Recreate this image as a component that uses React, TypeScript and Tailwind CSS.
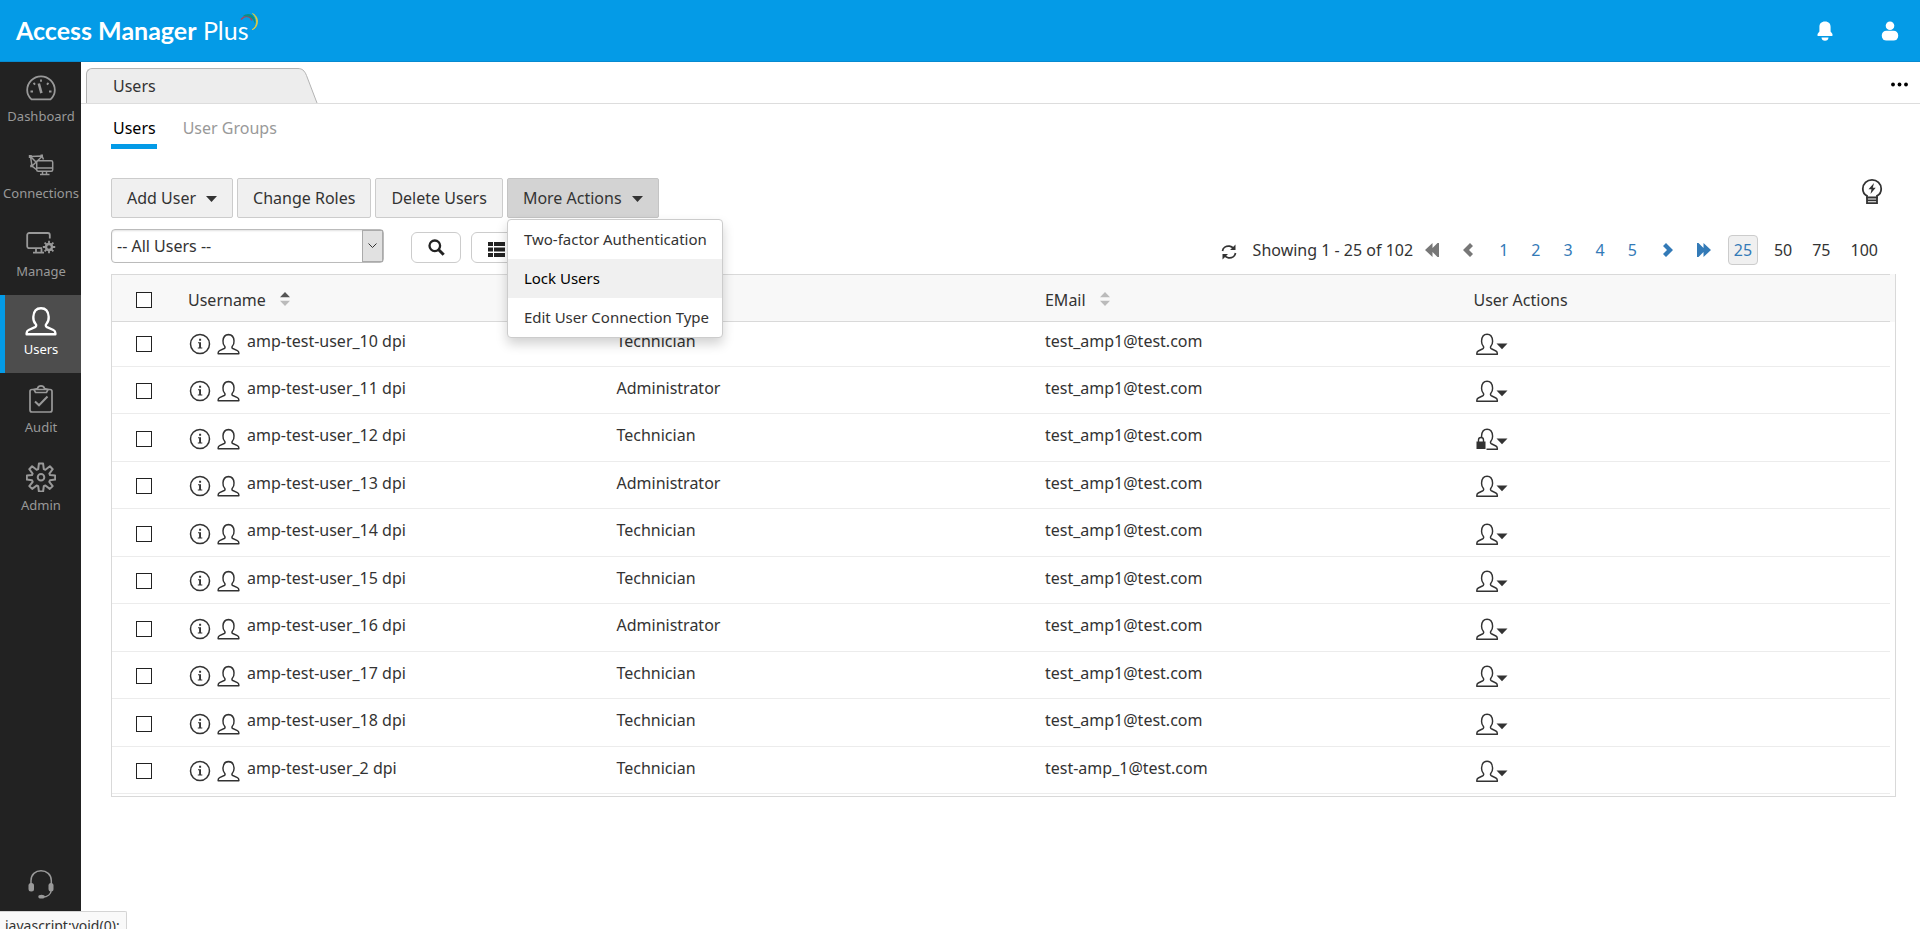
import type { ReactNode } from "react";

type IconProps = { className?: string };

const PERSON =
  "M8 17.2c-1.600-1.700-2.400-4-2.200-6.500C6.100 6 8.600 3 13 3s6.900 3 7.200 7.700c.2 2.500-.6 4.800-2.200 6.500-.9 1-.6 2.200.6 2.800l6 2.600c1.300.6 1.900 1.600 1.900 2.900v1H-.5v-1c0-1.300.6-2.300 1.900-2.900l6-2.600c1.200-.6 1.500-1.800.6-2.800z";

function PersonIcon({ className, thick = 1.6 }: IconProps & { thick?: number }) {
  return (
    <svg viewBox="-2 1 30 27" preserveAspectRatio="none" className={className} fill="none" stroke="currentColor" strokeWidth={thick} strokeLinejoin="round" aria-hidden="true">
      <path d={PERSON} />
    </svg>
  );
}

function DashboardIcon() {
  return (
    <svg viewBox="0 0 30 26" className="h-[26px] w-[30px]" fill="none" stroke="currentColor" strokeWidth="1.8" aria-hidden="true">
      <path d="M5.500 24.300C3 22 1.200 18.700 1.200 15.200 1.200 7.600 7.400 1.400 15 1.400s13.800 6.200 13.800 13.800c0 3.500-1.800 6.800-4.300 9.100z" />
      <path d="M12.800 8.500l2.600 9.700" strokeWidth="2.600" />
      <path d="M15 4.500v2.200M7.500 8l1.600 1.600M22.500 8l-1.600 1.600M4.500 16.500H7M23 16.500h2.500" />
    </svg>
  );
}

function ConnectionsIcon() {
  return (
    <svg viewBox="0 0 26 22" className="h-[22px] w-[26px]" fill="none" stroke="currentColor" strokeWidth="1.500" aria-hidden="true">
      <path d="M2.500 2.500L14 2M2.500 2.500L4 12l5 4M2.500 2.500L9 9M3.500 12.500L14 2.500M14 2l1.500 3.500" />
      <rect x="8.700" y="6.700" width="16" height="10.600" rx="1.500" fill="#222" />
      <path d="M9 14h15.500M14.500 17.500v2.500M18.500 17.500v2.500M12 20.500h9.500" />
      <path d="M.8 1h3v3h-3zM12.500.5h2.500v2.500h-2.500zM2.200 10.800h2.500v2.500H2.200z" fill="currentColor" stroke="none" />
    </svg>
  );
}

function ManageIcon() {
  return (
    <svg viewBox="0 0 30 22" className="h-[22px] w-[30px]" fill="none" stroke="currentColor" strokeWidth="1.800" aria-hidden="true">
      <path d="M16 16.200H3.200A2 2 0 0 1 1.200 14.200V3A2 2 0 0 1 3.200 1h18.600a2 2 0 0 1 2 2v3.500" />
      <path d="M10 16.500v4M15.500 16.500v4M7 20.700h11" />
      <circle cx="23" cy="15" r="3" strokeWidth="2.400" />
      <path d="M23 8.800v3M23 18.200v3M16.800 15h3M26.200 15h3M18.600 10.600l2.100 2.100M25.300 17.300l2.100 2.100M27.400 10.600l-2.100 2.100M20.700 17.300l-2.100 2.100" strokeWidth="1.800" />
    </svg>
  );
}

function AuditIcon() {
  return (
    <svg viewBox="0 0 24 28" className="h-[28px] w-[24px]" fill="none" stroke="currentColor" strokeWidth="1.700" aria-hidden="true">
      <rect x="1" y="4.500" width="22" height="22.500" rx="2" />
      <path d="M5 4.500L6.500 7.500h11L19 4.500 15.500 3.500C15 1.800 13.800.9 12 .9S9 1.800 8.500 3.500z" />
      <path d="M6 16.500l4 3.800 8.500-8.800" strokeWidth="2" />
    </svg>
  );
}

function AdminIcon() {
  return (
    <svg viewBox="0 0 30 30" className="size-[30px]" fill="none" stroke="currentColor" strokeWidth="2" strokeLinejoin="round" aria-hidden="true">
      <path d="M12.900 1.500h4.200l.7 5.600 1.600.7 4.500-3.500 2.800 2.900-3.300 4.400.6 1.500 5.200.5v3.900l-5.200.7-.7 1.600 3.400 4.300-2.900 2.800-4.400-3.400-1.600.7-.7 5.300h-4.200l-.7-5.300-1.600-.7-4.400 3.400-2.900-2.800 3.400-4.300-.7-1.600-5.200-.7v-3.900l5.200-.5.6-1.500L3.300 7.200l2.800-2.900 4.500 3.500 1.600-.7z" />
      <circle cx="15" cy="15.300" r="3.300" />
    </svg>
  );
}

function HeadsetIcon() {
  return (
    <svg viewBox="0 0 26 30" className="h-[30px] w-[26px]" fill="none" stroke="currentColor" strokeWidth="1.500" aria-hidden="true">
      <path d="M3 15v-3.500C3 5.500 7.500 1.700 13 1.700s10.300 3.800 10.300 9.800V15M23.300 21c-.3 4-3.500 7-8.800 7" />
      <rect x=".5" y="14" width="5.500" height="8.500" rx="2.500" fill="currentColor" stroke="none" />
      <rect x="20.500" y="14" width="5" height="8.500" rx="2.500" fill="currentColor" stroke="none" />
      <ellipse cx="13.500" cy="27.700" rx="3.200" ry="1.900" fill="currentColor" stroke="none" />
    </svg>
  );
}

function Caret() {
  return (
    <svg viewBox="0 0 11 6" className="mt-0.5 h-[6px] w-[11px]" fill="currentColor" aria-hidden="true">
      <path d="M0 0h11L5.500 6z" />
    </svg>
  );
}

function SortIcon({ up }: { up?: boolean }) {
  return (
    <svg viewBox="0 0 10 14" className="mb-0.5 h-[14px] w-[10px]" aria-hidden="true">
      <path d="M0 5.300L5 0l5 5.300z" fill={up ? "#555" : "#bbb"} />
      <path d="M0 8.700h10L5 14z" fill="#bbb" />
    </svg>
  );
}

function InfoIcon() {
  return (
    <svg viewBox="0 0 22 22" className="size-[22px]" fill="none" stroke="#333" strokeWidth="1.500" aria-hidden="true">
      <circle cx="11" cy="11" r="9.500" />
      <path d="M10.100 5.800h2v2h-2zM9 9.300h3v5.200h1.300v1H8.800v-1h1.300v-4.200H9z" fill="#333" stroke="none" />
    </svg>
  );
}

function UserActionIcon({ locked }: { locked?: boolean }) {
  return (
    <svg viewBox="0 0 32 22" className="h-[22px] w-[32px]" aria-hidden="true">
      <g transform="translate(1.200 -1.300) scale(.76 .85)">
        <path d={PERSON} fill="none" stroke="#333" strokeWidth="1.900" strokeLinejoin="round" />
      </g>
      {locked && (
        <g>
          <path d="M0 9h7l3.500 3v10H0z" fill="#fff" />
          <rect x=".5" y="13.500" width="9" height="7.500" fill="#333" />
          <path d="M2.500 14v-2a2.500 2.500 0 0 1 5 0v2" fill="none" stroke="#333" strokeWidth="1.400" />
        </g>
      )}
      <path d="M20.500 10.500h11L26 16.300z" fill="#333" />
    </svg>
  );
}

function Swoosh() {
  return (
    <svg viewBox="0 0 20 20" className="absolute -top-0.5 -right-2.5 h-[20px] w-[20px]" fill="none" aria-hidden="true">
      <path d="M2 7.500C6 3 11 3.500 13 8.500" stroke="#b0405a" strokeWidth="1.400" />
      <path d="M3.500 4.500C8 .5 14 1.500 16 7.500c.5 1.800.3 3.500 0 4.500C15 7 10.500 3.200 3.500 4.500z" fill="#0a8f86" />
      <path d="M13.500 1.500c4 2 6 6 4.500 11-.8 2.800-2.800 4.800-5 5.200 3-2 4.300-4.200 4.500-7.500.2-3.400-1.500-6.500-4-8.700z" fill="#f3d335" stroke="#e6cc3a" strokeWidth=".8" />
    </svg>
  );
}

const navItems: { label: string; icon: ReactNode; active?: boolean }[] = [
  { label: "Dashboard", icon: <DashboardIcon /> },
  { label: "Connections", icon: <ConnectionsIcon /> },
  { label: "Manage", icon: <ManageIcon /> },
  { label: "Users", icon: <PersonIcon className="h-[30px] w-[32px]" thick={2.2} />, active: true },
  { label: "Audit", icon: <AuditIcon /> },
  { label: "Admin", icon: <AdminIcon /> },
];

const users = [
  { name: "amp-test-user_10 dpi", role: "Technician", email: "test_amp1@test.com" },
  { name: "amp-test-user_11 dpi", role: "Administrator", email: "test_amp1@test.com" },
  { name: "amp-test-user_12 dpi", role: "Technician", email: "test_amp1@test.com", locked: true },
  { name: "amp-test-user_13 dpi", role: "Administrator", email: "test_amp1@test.com" },
  { name: "amp-test-user_14 dpi", role: "Technician", email: "test_amp1@test.com" },
  { name: "amp-test-user_15 dpi", role: "Technician", email: "test_amp1@test.com" },
  { name: "amp-test-user_16 dpi", role: "Administrator", email: "test_amp1@test.com" },
  { name: "amp-test-user_17 dpi", role: "Technician", email: "test_amp1@test.com" },
  { name: "amp-test-user_18 dpi", role: "Technician", email: "test_amp1@test.com" },
  { name: "amp-test-user_2 dpi", role: "Technician", email: "test-amp_1@test.com" },
];

function NavLink({ label, icon, active }: { label: string; icon: ReactNode; active?: boolean }) {
  return (
    <a
      href="#"
      className={
        active
          ? "flex h-[78px] flex-col items-center border-l-[5px] border-[#049be7] bg-[#4d4d4d] pr-1 pt-2.5 text-white"
          : "flex h-[78px] flex-col items-center pt-2.5 pl-px text-[#999] first:h-[77px]"
      }
    >
      <span className="flex h-8 items-center">{icon}</span>
      <span className="text-[13px] leading-6">{label}</span>
    </a>
  );
}

function ActionButton({ children, open, caret }: { children: ReactNode; open?: boolean; caret?: boolean }) {
  return (
    <button
      type="button"
      className={
        open
          ? "flex h-10 items-center gap-2.5 rounded-xs border border-[#c4c4c4] bg-[#d3d3d3] px-[15px]"
          : "flex h-10 items-center gap-2.5 rounded-xs border border-[#ccc] bg-[#f0f0f0] px-[15px]"
      }
    >
      {children}
      {caret && <Caret />}
    </button>
  );
}

function Checkbox({ label }: { label: string }) {
  return <input type="checkbox" aria-label={label} className="block size-4 appearance-none border border-[#222] bg-white checked:bg-[#049be7]" />;
}

function Header() {
  return (
    <header className="flex h-[62px] items-center justify-between border-b border-[#078ad0] bg-[#049be7] pr-5 pl-4 text-white">
      <div className="relative pb-0.5 font-['Lato',sans-serif] text-[25px] leading-8">
        <span className="font-bold">Access Manager</span> <span>Plus</span>
        <Swoosh />
      </div>
      <div className="flex items-center gap-[46px]">
        <button type="button" aria-label="Notifications">
          <svg viewBox="0 0 18 20" className="h-[20px] w-[18px]" fill="#fff" aria-hidden="true">
            <path d="M9 .5c3.800 0 5.600 2.300 5.600 5.500v4.500c0 .8 2 1.500 2 3.500 0 .7-.4 1-1 1H2.400c-.6 0-1-.3-1-1 0-2 2-2.700 2-3.500V6C3.400 2.800 5.200.5 9 .500zM5.500 16.500h7c0 2-1.500 3.300-3.500 3.300s-3.500-1.300-3.500-3.300z" />
          </svg>
        </button>
        <button type="button" aria-label="Account">
          <svg viewBox="0 0 20 20" className="size-5" fill="#fff" aria-hidden="true">
            <circle cx="10" cy="4.700" r="4.300" />
            <rect x="1.800" y="9.700" width="16.400" height="9.800" rx="4.600" />
          </svg>
        </button>
      </div>
    </header>
  );
}

function Pagination() {
  return (
    <nav aria-label="Pagination" className="flex h-[30px] items-center pr-[18px] text-[#337ab7]">
      <button type="button" aria-label="Refresh" className="mr-4 pt-1 text-[#333]">
        <svg viewBox="0 0 16 16" className="size-4" fill="none" stroke="currentColor" strokeWidth="1.700" aria-hidden="true">
          <path d="M1.500 7C2 3.800 5 1.800 8.500 2.200 10.300 2.500 11.500 3.300 12.500 4.300M14.500 9c-.5 3.200-3.500 5.200-7 4.800-1.800-.3-3-1.100-4-2.100" />
          <path d="M14.500.5V6H9zM1.500 15.500V10H7z" fill="currentColor" stroke="none" />
        </svg>
      </button>
      <span className="mr-3 text-[#333]">Showing 1 - 25 of 102</span>
      <button type="button" aria-label="First page" className="mr-6 text-[#777]">
        <svg viewBox="0 0 14 14" className="size-3.5" fill="currentColor" aria-hidden="true"><path d="M7.500 0v5l5-5H14v14h-1.500l-5-5v5L0 7z" /></svg>
      </button>
      <button type="button" aria-label="Previous page" className="mr-[26px] text-[#777]">
        <svg viewBox="0 0 10 14" className="h-[14px] w-[10px]" fill="currentColor" aria-hidden="true"><path d="M7 0l3 3-4 4 4 4-3 3-7-7z" /></svg>
      </button>
      <div className="mr-[26px] flex gap-[23px]">
        {["1", "2", "3", "4", "5"].map((n) => (
          <a key={n} href="#">{n}</a>
        ))}
      </div>
      <button type="button" aria-label="Next page" className="mr-6">
        <svg viewBox="0 0 10 14" className="h-[14px] w-[10px]" fill="currentColor" aria-hidden="true"><path d="M3 0L0 3l4 4-4 4 3 3 7-7z" /></svg>
      </button>
      <button type="button" aria-label="Last page" className="mr-[17px]">
        <svg viewBox="0 0 14 14" className="size-3.5" fill="currentColor" aria-hidden="true"><path d="M6.500 0v5l-5-5H0v14h1.500l5-5v5L14 7z" /></svg>
      </button>
      <div className="flex items-center gap-5 text-[#333]">
        <a href="#" className="-mr-1 flex size-[30px] items-center justify-center rounded-sm border border-[#ccc] bg-[#f0f0f0] text-[#337ab7]">25</a>
        <a href="#">50</a>
        <a href="#">75</a>
        <a href="#">100</a>
      </div>
    </nav>
  );
}

function UsersTable() {
  return (
    <div className="mt-2 border-x border-b border-[#d9d9d9] bg-[linear-gradient(#f8f8f8_48px,#fff_48px)] pr-[5px] pb-0.5">
      <table className="w-full table-fixed border-separate border-spacing-0 text-left">
        <thead>
          <tr className="h-12">
            <th className="w-[76px] border-y border-[#d9d9d9] pt-1 pl-6 font-normal"><Checkbox label="Select all users" /></th>
            <th className="w-[24.1%] border-y border-[#d9d9d9] pt-1 font-normal">
              <span className="flex items-center gap-3.5">Username <SortIcon up /></span>
            </th>
            <th className="w-[24.1%] border-y border-[#d9d9d9] pt-1 font-normal">
              <span className="flex items-center gap-3.5">Role <SortIcon /></span>
            </th>
            <th className="w-[24.1%] border-y border-[#d9d9d9] pt-1 font-normal">
              <span className="flex items-center gap-3.5">EMail <SortIcon /></span>
            </th>
            <th className="border-y border-[#d9d9d9] pt-1 font-normal">User Actions</th>
          </tr>
        </thead>
        <tbody>
          {users.map((user) => (
            <tr key={user.name} className="h-12 first:h-[45px] even:h-[47px] [&>td]:border-b [&>td]:border-[#ececec] [&>td]:p-0 [&:not(:first-child)>td]:pt-0.5">
              <td><span className="flex pl-6"><Checkbox label={`Select ${user.name}`} /></span></td>
              <td>
                <span className="flex items-center pl-px">
                  <InfoIcon />
                  <PersonIcon className="mr-[7px] ml-1.5 h-[22px] w-[23px]" thick={1.9} />
                  <span className="pb-[7px]">{user.name}</span>
                </span>
              </td>
              <td><span className="flex pb-[7px]">{user.role}</span></td>
              <td><span className="flex pb-[7px]">{user.email}</span></td>
              <td>
                <button type="button" aria-label={`Actions for ${user.name}`} className="ml-[3px] block"><UserActionIcon locked={user.locked} /></button>
              </td>
            </tr>
          ))}
        </tbody>
      </table>
    </div>
  );
}

export default function App() {
  return (
    <div className="flex h-screen flex-col overflow-hidden bg-white font-['Noto_Sans',sans-serif] text-base text-[#333]">
      <Header />
      <div className="flex min-h-0 flex-1">
        <aside className="flex w-[81px] shrink-0 flex-col justify-between bg-[#222]">
          <nav aria-label="Main">
            {navItems.map((item) => (
              <NavLink key={item.label} {...item} />
            ))}
          </nav>
          <a href="#" className="flex flex-col items-center text-[#999]">
            <HeadsetIcon />
            <span className="pt-1.5 text-[13px] leading-6">Support</span>
          </a>
        </aside>

        <main className="min-w-0 flex-1">
          <div className="flex h-[42px] items-end justify-between border-b border-[#ddd] pr-3 pl-[5px]">
            <div className="flex h-[35px]">
              <div className="flex w-[211px] items-center rounded-tl-md border-t border-l border-[#b3b3b3] bg-[#ededed] pl-[26px]">Users</div>
              <svg viewBox="0 0 21 35" className="h-[35px] w-[21px]" aria-hidden="true">
                <path d="M0 .5h1c4 0 6.500 2 8.500 7L20 35H0z" fill="#ededed" />
                <path d="M0 .5h1c4 0 6.500 2 8.500 7L20 35" fill="none" stroke="#b3b3b3" />
              </svg>
            </div>
            <button type="button" aria-label="More" className="mb-4">
              <svg viewBox="0 0 17 5" className="h-[5px] w-[17px]" fill="#000" aria-hidden="true">
                <circle cx="2" cy="2.500" r="1.900" /><circle cx="8.500" cy="2.500" r="1.900" /><circle cx="15" cy="2.500" r="1.900" />
              </svg>
            </button>
          </div>

          <div className="pr-6 pl-[30px]">
            <div className="flex h-[45px] gap-6">
              <a href="#" className="flex items-center border-b-[5px] border-[#049be7] pt-2 pr-px pl-0.5 text-black">Users</a>
              <a href="#" className="flex items-center border-b-[5px] border-transparent pt-2 pr-px pl-0.5 text-[#999]">User Groups</a>
            </div>

            <div className="mt-[29px] flex justify-between">
              <div className="flex gap-1">
                <ActionButton caret>Add User</ActionButton>
                <ActionButton>Change Roles</ActionButton>
                <ActionButton>Delete Users</ActionButton>
                <div className="relative">
                  <ActionButton open caret>More Actions</ActionButton>
                  <div role="menu" className="absolute top-[41px] left-0 z-10 flex w-[216px] flex-col rounded-sm border border-[#ccc] bg-white text-left text-[15px] shadow-[0_6px_12px_rgba(0,0,0,0.18)]">
                    <button type="button" role="menuitem" className="h-[39px] px-4 text-left whitespace-nowrap">Two-factor Authentication</button>
                    <button type="button" role="menuitem" className="h-[39px] bg-[#f0f0f0] px-4 text-left whitespace-nowrap text-black">Lock Users</button>
                    <button type="button" role="menuitem" className="h-[39px] px-4 text-left whitespace-nowrap">Edit User Connection Type</button>
                  </div>
                </div>
              </div>
              <button type="button" aria-label="Tips" className="mr-[13px] self-start">
                <svg viewBox="0 0 22 27" className="h-[27px] w-[22px]" fill="none" stroke="#333" strokeWidth="1.800" aria-hidden="true">
                  <path d="M6 19.500v-1.600C3.200 16.500 1.800 13.800 1.800 10.800 1.800 5.700 6 1.800 11 1.800s9.200 3.900 9.200 9c0 3-1.400 5.700-4.200 7.100v1.600z" />
                  <path d="M6 19v6.200h10V19M6 22.300h10" />
                  <path d="M13 5l-5.500 6.300h3L9.500 16l5.200-6.200h-2.900z" fill="#333" stroke="none" />
                </svg>
              </button>
            </div>

            <div className="mt-[11px] flex h-[37px] items-start justify-between">
              <div className="flex items-start">
                <div className="relative mr-[27px]">
                  <select aria-label="User filter" className="block h-[34px] w-[273px] appearance-none rounded-sm border border-[#bbb] bg-white pl-[5px] shadow-[inset_0_1px_2px_rgba(0,0,0,0.12)]">
                    <option>-- All Users --</option>
                  </select>
                  <span className="pointer-events-none absolute top-px right-px flex h-8 w-[21px] items-center justify-center border border-[#aaa] bg-[#e1e1e1]">
                    <svg viewBox="0 0 9 6" className="h-[6px] w-[9px]" fill="none" stroke="#333" aria-hidden="true"><path d="M.5.500l4 4 4-4" /></svg>
                  </span>
                </div>
                <button type="button" aria-label="Search" className="mt-[3px] mr-2.5 flex h-[31px] w-[50px] items-center justify-center rounded-md border border-[#ccc] bg-white">
                  <svg viewBox="0 0 17 17" className="size-[17px]" fill="none" stroke="#222" aria-hidden="true"><circle cx="6.800" cy="6.800" r="5.300" strokeWidth="2.300" /><path d="M10.700 10.700l5 5" strokeWidth="3" /></svg>
                </button>
                <button type="button" aria-label="Choose columns" className="mt-[3px] flex h-[31px] w-[50px] items-center justify-center rounded-md border border-[#ccc] bg-white pt-1">
                  <svg viewBox="0 0 17 15" className="h-[15px] w-[17px]" fill="#222" aria-hidden="true"><path d="M0 0h5v4H0zM6 0h11v4H6zM0 5.500h5v4H0zM6 5.500h11v4H6zM0 11h5v4H0zM6 11h11v4H6z" /></svg>
                </button>
              </div>
              <div className="mt-1.5"><Pagination /></div>
            </div>

            <UsersTable />
          </div>
        </main>
      </div>
      <div className="fixed bottom-0 left-0 z-20 h-[18px] overflow-hidden rounded-tr-xs border-t border-r border-[#d4d4d4] bg-[#f9f9f9] pr-1.5 pl-[5px] text-[14px] leading-7 text-[#333]">
        javascript:void(0);
      </div>
    </div>
  );
}
